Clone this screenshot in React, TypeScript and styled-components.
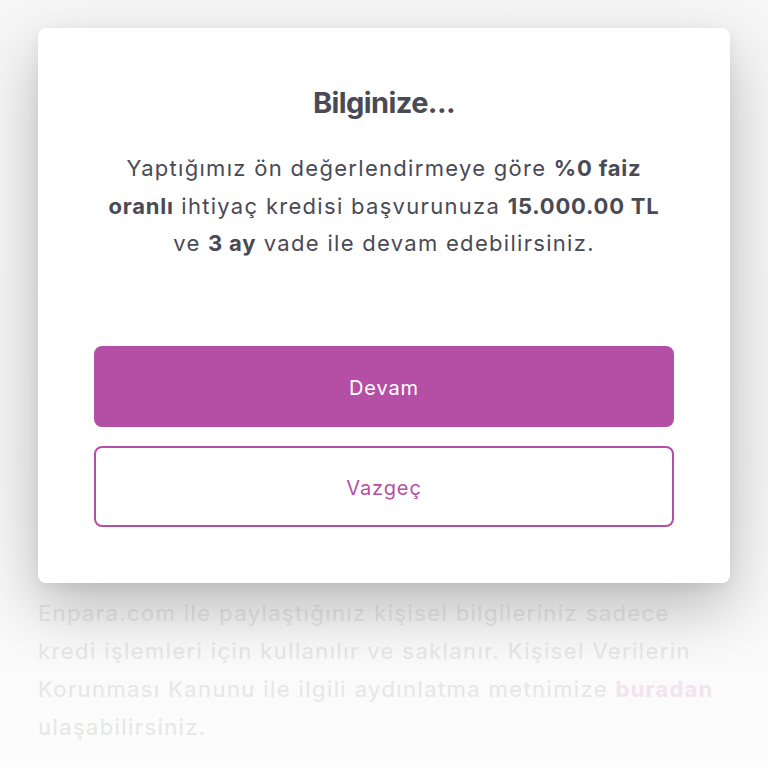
import { FC } from "react";
import styled, { createGlobalStyle } from "styled-components";

const GlobalStyle = createGlobalStyle`
html, body {
    margin: 0;
    padding: 0;
    background-color: #fafafa;
}
body {
    font-family: "Inter", "Open Sans", sans-serif;
}
`;

const PageWrapper = styled.div`
display: flex;
flex-direction: column;
width: 768px;
height: 768px;
box-sizing: border-box;
padding: 28px 38px 0 38px;
overflow: hidden;
background: linear-gradient(180deg, #f6f6f6 0%, #f4f4f4 60%, #fdfdfd 100%);
`;

const ModalCard = styled.div`
position: relative;
z-index: 2;
display: flex;
flex-direction: column;
align-items: center;
background-color: #ffffff;
border-radius: 8px;
padding: 58px 56px 56px 56px;
box-shadow: 0px 26px 60px rgba(0, 0, 0, 0.24), 0px 4px 14px rgba(0, 0, 0, 0.06);
`;

const Title = styled.h1`
margin: 0;
font-family: "Inter", sans-serif;
font-weight: 700;
font-size: 29px;
line-height: 34px;
letter-spacing: -0.6px;
color: #4a4a55;
`;

const Message = styled.p`
margin: 30px 0 0 0;
text-align: center;
font-size: 22px;
line-height: 37.5px;
font-weight: 400;
letter-spacing: 1.3px;
white-space: nowrap;
color: #4a4a55;
& > b {
    font-weight: 700;
    letter-spacing: 0.8px;
}
`;

const ButtonGroup = styled.div`
display: flex;
flex-direction: column;
width: 100%;
gap: 19px;
margin-top: 83px;
`;

const ActionButton = styled.button<{ $outline?: boolean }>`
display: flex;
align-items: center;
justify-content: center;
width: 100%;
height: 81px;
box-sizing: border-box;
padding-top: 5px;
border-radius: 8px;
border: 2px solid #b44fa5;
background-color: ${(p) => (p.$outline ? "#ffffff" : "#b44fa5")};
color: ${(p) => (p.$outline ? "#b44fa5" : "#ffffff")};
font-family: "Inter", sans-serif;
font-size: 20px;
font-weight: 400;
letter-spacing: 0.9px;
cursor: pointer;
`;

const BackgroundText = styled.p`
margin: 11px 0 0 0;
font-size: 22px;
line-height: 38px;
letter-spacing: 1.4px;
white-space: nowrap;
color: #e6e6e6;
& > span {
    color: #f1e4ee;
    font-weight: 700;
    letter-spacing: 1.2px;
}
`;

export const App: FC = () => {
    return (
        <>
            <GlobalStyle />
            <PageWrapper>
                <ModalCard>
                    <Title>Bilginize...</Title>
                    <Message>
                        Yaptığımız ön değerlendirmeye göre <b>%0 faiz</b>
                        <br />
                        <b>oranlı</b> ihtiyaç kredisi başvurunuza <b>15.000.00 TL</b>
                        <br />
                        ve <b>3 ay</b> vade ile devam edebilirsiniz.
                    </Message>
                    <ButtonGroup>
                        <ActionButton>Devam</ActionButton>
                        <ActionButton $outline>Vazgeç</ActionButton>
                    </ButtonGroup>
                </ModalCard>
                <BackgroundText>
                    Enpara.com ile paylaştığınız kişisel bilgileriniz sadece
                    <br />
                    kredi işlemleri için kullanılır ve saklanır. Kişisel Verilerin
                    <br />
                    Korunması Kanunu ile ilgili aydınlatma metnimize <span>buradan</span>
                    <br />
                    ulaşabilirsiniz.
                </BackgroundText>
            </PageWrapper>
        </>
    );
};

export default App;
